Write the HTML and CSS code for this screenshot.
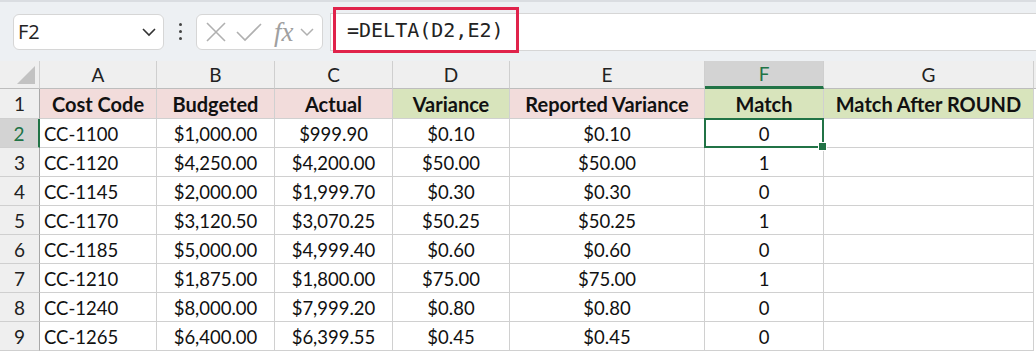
FILE: index.html
```html
<!DOCTYPE html>
<html lang="en">
  <head>
    <meta charset="UTF-8" />
    <meta name="viewport" content="width=device-width, initial-scale=1.0" />
    <title>DELTA</title>
    <link rel="stylesheet" href="styles.css">
  </head>
  <body>
    <div class="toolbar">
      <div class="namebox">
        <span>F2</span>
        <svg class="chev" width="16" height="10" viewBox="0 0 16 10"><path d="M2 2 L8 8 L14 2" fill="none" stroke="#333" stroke-width="1.6"/></svg>
      </div>
      <div class="dots"><i></i><i></i><i></i></div>
      <div class="fxbox">
        <svg width="22" height="22" viewBox="0 0 22 22"><path d="M2 2 L20 20 M20 2 L2 20" stroke="#b0b0b0" stroke-width="1.6" fill="none"/></svg>
        <svg width="26" height="22" viewBox="0 0 26 22"><path d="M1 11 L9 19 L25 3" stroke="#b0b0b0" stroke-width="1.6" fill="none"/></svg>
        <span class="fx">fx</span>
        <svg width="14" height="10" viewBox="0 0 14 10"><path d="M1 2 L7 8 L13 2" fill="none" stroke="#b0b0b0" stroke-width="1.5"/></svg>
      </div>
      <div class="formula">
        <span class="formula-text">=DELTA(D2,E2)</span>
      </div>
    </div>

    <div class="sheet">
      <div class="colhead corner"></div>
      <div class="colhead">A</div>
      <div class="colhead">B</div>
      <div class="colhead">C</div>
      <div class="colhead">D</div>
      <div class="colhead">E</div>
      <div class="colhead active">F</div>
      <div class="colhead">G</div>
      <div class="colhead rest"></div>

      <div class="rowhead">1</div>
      <div class="cell title pink">Cost Code</div>
      <div class="cell title pink">Budgeted</div>
      <div class="cell title pink">Actual</div>
      <div class="cell title green">Variance</div>
      <div class="cell title pink">Reported Variance</div>
      <div class="cell title green">Match</div>
      <div class="cell title green">Match After ROUND</div>
      <div class="cell rest"></div>

      <div class="rowhead active">2</div>
      <div class="cell left">CC-1100</div>
      <div class="cell">$1,000.00</div>
      <div class="cell">$999.90</div>
      <div class="cell">$0.10</div>
      <div class="cell">$0.10</div>
      <div class="cell selected">0<span class="handle"></span></div>
      <div class="cell"></div>
      <div class="cell rest"></div>

      <div class="rowhead">3</div>
      <div class="cell left">CC-1120</div>
      <div class="cell">$4,250.00</div>
      <div class="cell">$4,200.00</div>
      <div class="cell">$50.00</div>
      <div class="cell">$50.00</div>
      <div class="cell">1</div>
      <div class="cell"></div>
      <div class="cell rest"></div>

      <div class="rowhead">4</div>
      <div class="cell left">CC-1145</div>
      <div class="cell">$2,000.00</div>
      <div class="cell">$1,999.70</div>
      <div class="cell">$0.30</div>
      <div class="cell">$0.30</div>
      <div class="cell">0</div>
      <div class="cell"></div>
      <div class="cell rest"></div>

      <div class="rowhead">5</div>
      <div class="cell left">CC-1170</div>
      <div class="cell">$3,120.50</div>
      <div class="cell">$3,070.25</div>
      <div class="cell">$50.25</div>
      <div class="cell">$50.25</div>
      <div class="cell">1</div>
      <div class="cell"></div>
      <div class="cell rest"></div>

      <div class="rowhead">6</div>
      <div class="cell left">CC-1185</div>
      <div class="cell">$5,000.00</div>
      <div class="cell">$4,999.40</div>
      <div class="cell">$0.60</div>
      <div class="cell">$0.60</div>
      <div class="cell">0</div>
      <div class="cell"></div>
      <div class="cell rest"></div>

      <div class="rowhead">7</div>
      <div class="cell left">CC-1210</div>
      <div class="cell">$1,875.00</div>
      <div class="cell">$1,800.00</div>
      <div class="cell">$75.00</div>
      <div class="cell">$75.00</div>
      <div class="cell">1</div>
      <div class="cell"></div>
      <div class="cell rest"></div>

      <div class="rowhead">8</div>
      <div class="cell left">CC-1240</div>
      <div class="cell">$8,000.00</div>
      <div class="cell">$7,999.20</div>
      <div class="cell">$0.80</div>
      <div class="cell">$0.80</div>
      <div class="cell">0</div>
      <div class="cell"></div>
      <div class="cell rest"></div>

      <div class="rowhead">9</div>
      <div class="cell left">CC-1265</div>
      <div class="cell">$6,400.00</div>
      <div class="cell">$6,399.55</div>
      <div class="cell">$0.45</div>
      <div class="cell">$0.45</div>
      <div class="cell">0</div>
      <div class="cell"></div>
      <div class="cell rest"></div>
    </div>
  </body>
</html>
```

FILE: styles.css
```css
body {
  margin: 0;
  width: 1036px;
  height: 357px;
  overflow: hidden;
  background-color: #ffffff;
  font-family: Lato, "Liberation Sans", sans-serif;
}

.toolbar {
  display: flex;
  align-items: center;
  border-top: 2px solid #dadde1;
  background-color: #edf0f3;
  padding-left: 13px;
  box-sizing: border-box;
  height: 61px;
}

.namebox {
  display: flex;
  align-items: center;
  justify-content: space-between;
  width: 151px;
  height: 36px;
  box-sizing: border-box;
  padding: 0 6px 0 4px;
  background-color: #ffffff;
  border: 1px solid #d6d6d6;
  border-radius: 6px;
  font-family: "Open Sans", "Noto Sans", sans-serif;
  font-size: 20px;
  color: #222222;
}

.dots {
  display: flex;
  flex-direction: column;
  gap: 4px;
  width: 32px;
  align-items: center;
}

.dots i {
  display: block;
  width: 3px;
  height: 3px;
  border-radius: 50%;
  background-color: #444444;
}

.fxbox {
  display: flex;
  align-items: center;
  gap: 9px;
  width: 127px;
  height: 36px;
  box-sizing: border-box;
  padding-left: 8px;
  background-color: #ffffff;
  border: 1px solid #d6d6d6;
  border-radius: 6px;
}

.fx {
  font-family: "Liberation Serif", serif;
  font-style: italic;
  font-size: 27px;
  line-height: 30px;
  color: #a0a0a0;
  margin-left: 3px;
  margin-right: -3px;
}

.formula {
  position: relative;
  flex: 1;
  height: 38px;
  margin-left: 7px;
  margin-top: 1px;
  background-color: #ffffff;
  border-top: 1px solid #d6d6d6;
  border-bottom: 1px solid #d6d6d6;
  border-left: 1px solid #d0d0d0;
  box-sizing: border-box;
}

.formula-text {
  position: absolute;
  left: 2px;
  top: -7px;
  width: 186px;
  height: 46px;
  box-sizing: border-box;
  border: 3px solid #e0234b;
  padding-left: 11px;
  line-height: 40px;
  font-family: "DejaVu Sans Mono", monospace;
  font-size: 20px;
  color: #222222;
}

.sheet {
  display: grid;
  grid-template-columns: 40px 117px 118px 118px 117px 195px 119px 210px 1fr;
  grid-template-rows: 28px 30px repeat(8, 29px) 20px;
  font-size: 18.5px;
  color: #111111;
}

.colhead {
  display: flex;
  align-items: center;
  justify-content: center;
  background-color: #efefef;
  border-right: 1px solid #cfcfcf;
  border-bottom: 1px solid #bdbdbd;
  box-sizing: border-box;
  color: #222222;
  font-size: 19px;
}

.colhead.corner {
  position: relative;
}

.colhead.corner::after {
  content: "";
  position: absolute;
  right: 4px;
  bottom: 4px;
  border-left: 18px solid transparent;
  border-bottom: 18px solid #c2c2c2;
}

.colhead.active {
  background-color: #d3d3d3;
  color: #217346;
  border-bottom: 3px solid #217346;
}

.colhead.rest {
  border-right: none;
}

.rowhead {
  display: flex;
  align-items: center;
  justify-content: center;
  background-color: #efefef;
  border-right: 1px solid #a8a8a8;
  border-bottom: 1px solid #cfcfcf;
  box-sizing: border-box;
  color: #222222;
  font-size: 19px;
}

.rowhead.active {
  background-color: #d3d3d3;
  color: #217346;
  border-right: 2px solid #217346;
}

.cell {
  display: flex;
  align-items: center;
  justify-content: center;
  border-right: 1px solid #d0d0d0;
  border-bottom: 1px solid #d0d0d0;
  box-sizing: border-box;
  padding-top: 2px;
  white-space: nowrap;
}

.cell.left {
  justify-content: flex-start;
  padding-left: 4px;
}

.cell.rest {
  border-right: none;
  border-bottom: none;
}

.title {
  font-weight: bold;
  font-size: 20px;
  padding-top: 0;
}

.pink {
  background-color: #f2dcdb;
}

.green {
  background-color: #d8e4bc;
}

.selected {
  position: relative;
}

.selected::after {
  content: "";
  position: absolute;
  left: -1px;
  top: -1px;
  right: -1px;
  bottom: -1px;
  border: 2px solid #217346;
}

.handle {
  position: absolute;
  right: -4px;
  bottom: -4px;
  width: 7px;
  height: 7px;
  background-color: #217346;
  border: 1px solid #ffffff;
  z-index: 2;
}
```
